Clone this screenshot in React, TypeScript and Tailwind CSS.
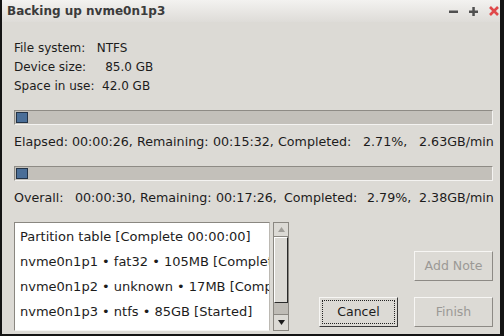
const font = { fontFamily: '"DejaVu Sans", "Liberation Sans", sans-serif' }

function TitleBar() {
  return (
    <div className="h-[22px] flex items-center justify-between pl-[5px] pr-[1px] bg-gradient-to-b from-[#f3f2f0] to-[#dedcd8]">
      <span className="text-[12px] font-bold text-[#3b3b3b]">Backing up nvme0n1p3</span>
      <div className="flex items-center gap-[11px]">
        <svg width="9" height="9" viewBox="0 0 9 9">
          <rect x="0" y="3.5" width="9" height="2.5" fill="#505050" />
        </svg>
        <svg width="9" height="9" viewBox="0 0 9 9">
          <rect x="0" y="3.5" width="9" height="2.5" fill="#505050" />
          <rect x="3.3" y="0" width="2.5" height="9" fill="#505050" />
        </svg>
        <svg width="10" height="10" viewBox="0 0 10 10">
          <path d="M1 1 L9 9 M9 1 L1 9" stroke="#e0484a" strokeWidth="2.6" />
        </svg>
      </div>
    </div>
  )
}

function Bar() {
  return (
    <div className="h-[15px] w-[479px] border-t border-l border-[#8e8b85] border-b border-r border-b-[#f4f3f1] border-r-[#f4f3f1] bg-[#c3c0ba] flex items-center pl-px">
      <div className="w-[12px] h-[11px] bg-[#4a6e98] border border-[#233347]" />
    </div>
  )
}

// each segment gets a fixed box, so the columns land where the reference puts them
function StatLine({ segs }: { segs: [string, number][] }) {
  return (
    <div className="flex leading-[19px] whitespace-nowrap text-[12.67px]">
      {segs.map(([t, w], i) => (
        <span key={i} style={{ width: w || undefined }} className="shrink-0">
          {t}
        </span>
      ))}
    </div>
  )
}

function Btn({ label, disabled, focus }: { label: string; disabled?: boolean; focus?: boolean }) {
  return (
    <div
      className={`w-[79px] h-[30px] flex items-center justify-center border border-t-[#f7f6f4] border-l-[#f7f6f4] ${
        focus ? 'border-b-[#3a3a3a] border-r-[#3a3a3a] p-[2px]' : 'border-b-[#8d8a85] border-r-[#8d8a85]'
      } bg-[#dcdad5] text-[12.5px] ${disabled ? 'text-[#9b9995]' : 'text-[#1c1c1c]'}`}
    >
      {focus ? (
        <div className="w-full h-full border border-dotted border-[#222] flex items-center justify-center">{label}</div>
      ) : (
        label
      )}
    </div>
  )
}

const rows = [
  'Partition table [Complete 00:00:00]',
  'nvme0n1p1 • fat32 • 105MB [Complete 00:00:03]',
  'nvme0n1p2 • unknown • 17MB [Complete 00:00:01]',
  'nvme0n1p3 • ntfs • 85GB [Started]',
]

export default function App() {
  return (
    <div
      style={font}
      className="w-[504px] h-[336px] flex flex-col bg-[#dcdad5] border-l-2 border-r-4 border-b-2 border-[#141414] text-[12px] text-[#1c1c1c] overflow-hidden"
    >
      <TitleBar />
      <div className="flex flex-col pl-[12px] pt-[17px]">
        <div className="leading-[19px] whitespace-pre">
          <div>File system:   NTFS</div>
          <div>Device size:     85.0 GB</div>
          <div>Space in use:  42.0 GB</div>
        </div>
        <div className="mt-[14px]">
          <Bar />
        </div>
        <div className="mt-[7px]">
          <StatLine
            segs={[
              ['Elapsed:', 58],
              ['00:00:26,', 65],
              ['Remaining:', 76],
              ['00:15:32,', 65],
              ['Completed:', 85],
              ['2.71%,', 56],
              ['2.63GB/min', 0],
            ]}
          />
        </div>
        <div className="mt-[15px]">
          <Bar />
        </div>
        <div className="mt-[7px]">
          <StatLine
            segs={[
              ['Overall:', 61],
              ['00:00:30,', 65],
              ['Remaining:', 76],
              ['00:17:26,', 68],
              ['Completed:', 83],
              ['2.79%,', 52],
              ['2.38GB/min', 0],
            ]}
          />
        </div>
        <div className="mt-[15px] flex h-[109px]">
          <div className="w-[256px] h-full bg-white border border-[#8a8781] border-b-[#f4f3f1] border-r-[#bcb9b3] overflow-hidden pt-px pl-[5px] text-[13px]">
            {rows.map((r) => (
              <div key={r} className="h-[25px] leading-[25px] whitespace-nowrap">
                {r}
              </div>
            ))}
          </div>
          <div className="ml-[3px] w-[16px] h-full flex flex-col border border-[#8a8781] bg-[#bfbcb6]">
            <div className="h-[14px] bg-[#dcdad5] border-b border-[#8a8781] flex items-center justify-center">
              <svg width="7" height="5" viewBox="0 0 7 5">
                <path d="M0 5 H7 L3.5 0 Z" fill="#a09e99" />
              </svg>
            </div>
            <div className="h-[66px] bg-[#dcdad5] border-b border-r border-[#2a2a2a] border-t border-t-white border-l border-l-white" />
            <div className="flex-1" />
            <div className="h-[16px] bg-[#dcdad5] border-t border-[#8a8781] flex items-center justify-center">
              <svg width="7" height="5" viewBox="0 0 7 5">
                <path d="M0 0 H7 L3.5 5 Z" fill="#1c1c1c" />
              </svg>
            </div>
          </div>
          <div className="flex-1 flex flex-col items-end justify-end pr-[7px] pb-[4px] gap-[16px]">
            <Btn label="Add Note" disabled />
            <div className="flex gap-[16px]">
              <Btn label="Cancel" focus />
              <Btn label="Finish" disabled />
            </div>
          </div>
        </div>
      </div>
    </div>
  )
}
